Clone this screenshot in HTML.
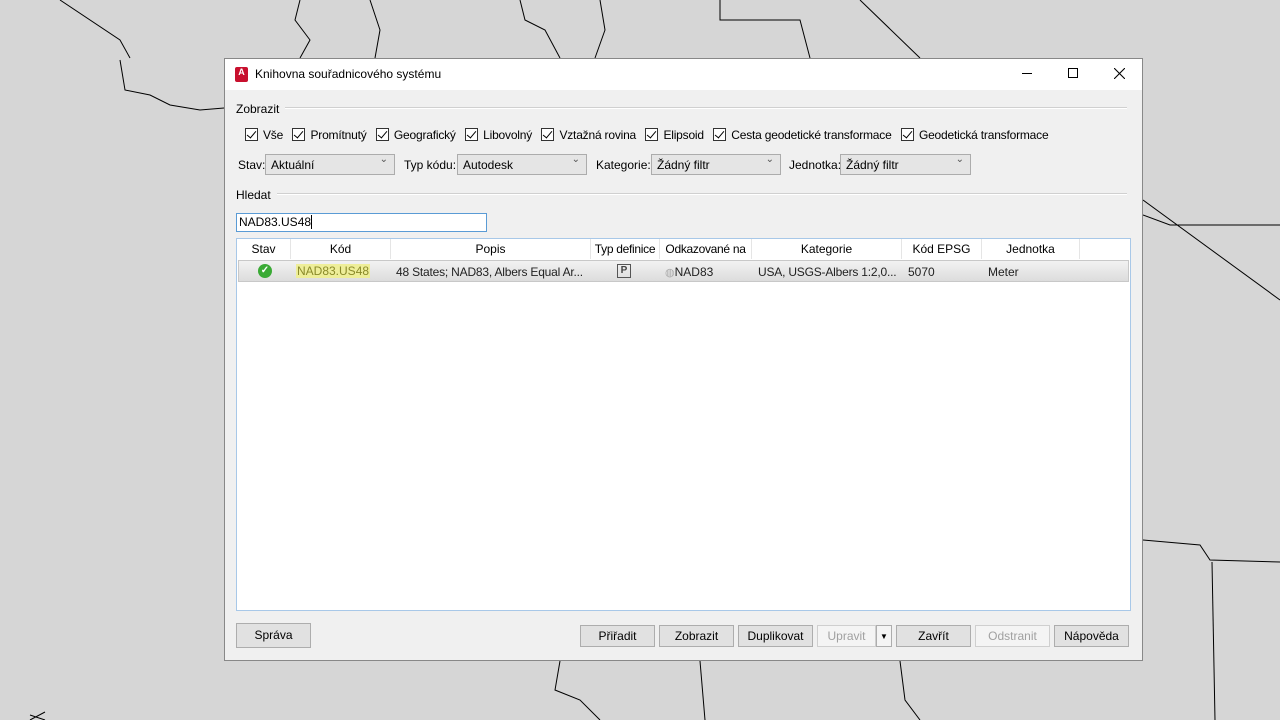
<!DOCTYPE html>
<html><head><style>
*{box-sizing:border-box;margin:0;padding:0}
body{width:1280px;height:720px;background:#d6d6d6;font-family:"Liberation Sans",sans-serif;font-size:12px;color:#000;position:relative;overflow:hidden}
.a{position:absolute}
.dlg{left:224px;top:58px;width:919px;height:603px;background:#f0f0f0;border:1px solid #888}
.tb{left:0;top:0;width:917px;height:31px;background:#fff}
.cb{display:inline-block;width:13px;height:13px;border:1px solid #333;background:#fff;vertical-align:-2px;margin-right:5px;position:relative}
.cb:after{content:"";position:absolute;left:3px;top:0px;width:4px;height:8px;border:solid #000;border-width:0 1.5px 1.5px 0;transform:rotate(40deg)}
.sel{height:21px;border:1px solid #acacac;background:#e5e5e5;padding:3px 5px;font-size:12px}
.sel:after{content:"⌄";position:absolute;right:6px;top:-1px;font-size:10px;color:#555}
.btn{height:23px;border:1px solid #adadad;background:#e1e1e1;text-align:center;line-height:21px;font-size:12px}
.dis{color:#a0a0a0;background:#f4f4f4;border-color:#cfcfcf}
.hd{top:0;height:20px;line-height:20px;text-align:center;border-right:1px solid #e5e5e5}
.line{height:2px;background:#d0d0d0;border-bottom:1px solid #fff}
</style></head><body>
<svg class="a" style="left:0;top:0" width="1280" height="720" fill="none" stroke="#000" stroke-width="1">
<path d="M60 0 L120 40 L130 58"/><path d="M120 60 L125 90 L150 95 L170 105 L200 110 L224 108"/>
<path d="M300 0 L295 20 L310 40 L300 58"/><path d="M370 0 L380 30 L375 58"/>
<path d="M520 0 L525 20 L545 30 L560 58"/><path d="M600 0 L605 30 L595 58"/>
<path d="M720 0 L720 20 L800 20 L810 58"/><path d="M860 0 L920 58"/>
<path d="M1143 200 L1280 300"/><path d="M1143 215 L1170 225 L1280 225"/>
<path d="M1143 540 L1200 545 L1210 560 L1280 562"/><path d="M1212 562 L1215 720"/>
<path d="M560 661 L555 690 L580 700 L600 720"/><path d="M700 661 L705 720"/><path d="M900 661 L905 700 L920 720"/>
<path d="M30 715 L45 720 M30 720 L45 712"/>
</svg>
<div class="a dlg">
 <div class="a tb">
  <div class="a" style="left:10px;top:8px;width:13px;height:15px;background:#c8102e;border-radius:2px;color:#fff;font-size:9px;font-weight:bold;text-align:center;line-height:11px">A</div>
  <div class="a" style="left:30px;top:8px;font-size:12px">Knihovna souřadnicového systému</div>
  <div class="a" style="left:797px;top:14px;width:10px;height:1px;background:#000"></div>
  <div class="a" style="left:843px;top:9px;width:10px;height:10px;border:1px solid #000"></div>
  <svg class="a" style="left:889px;top:9px" width="11" height="11" stroke="#000" stroke-width="1.1"><path d="M0 0 L11 11 M11 0 L0 11"/></svg>
 </div>
 <div class="a" style="left:11px;top:43px">Zobrazit</div>
 <div class="a line" style="left:60px;top:48px;width:842px"></div>
 <div class="a" style="left:20px;top:69px;white-space:nowrap;font-size:12px;letter-spacing:-0.2px">
  <span class="cb"></span>Vše&nbsp;&nbsp;&nbsp;<span class="cb"></span>Promítnutý&nbsp;&nbsp;&nbsp;<span class="cb"></span>Geografický&nbsp;&nbsp;&nbsp;<span class="cb"></span>Libovolný&nbsp;&nbsp;&nbsp;<span class="cb"></span>Vztažná rovina&nbsp;&nbsp;&nbsp;<span class="cb"></span>Elipsoid&nbsp;&nbsp;&nbsp;<span class="cb"></span>Cesta geodetické transformace&nbsp;&nbsp;&nbsp;<span class="cb"></span>Geodetická transformace</div>
 <div class="a" style="left:13px;top:99px">Stav:</div>
 <div class="a sel" style="left:40px;top:95px;width:130px">Aktuální</div>
 <div class="a" style="left:179px;top:99px">Typ kódu:</div>
 <div class="a sel" style="left:232px;top:95px;width:130px">Autodesk</div>
 <div class="a" style="left:371px;top:99px">Kategorie:</div>
 <div class="a sel" style="left:426px;top:95px;width:130px">Žádný filtr</div>
 <div class="a" style="left:564px;top:99px">Jednotka:</div>
 <div class="a sel" style="left:615px;top:95px;width:131px">Žádný filtr</div>
 <div class="a" style="left:11px;top:129px">Hledat</div>
 <div class="a line" style="left:52px;top:134px;width:850px"></div>
 <div class="a" style="left:11px;top:154px;width:251px;height:19px;background:#fff;border:1px solid #5a9bd5;padding:1px 2px">NAD83.US48<span style="border-left:1px solid #000"></span></div>
 <div class="a" style="left:11px;top:179px;width:895px;height:373px;background:#fff;border:1px solid #a8c8e8">
  <div class="a hd" style="left:0;width:54px">Stav</div>
  <div class="a hd" style="left:54px;width:100px">Kód</div>
  <div class="a hd" style="left:154px;width:200px">Popis</div>
  <div class="a hd" style="left:354px;width:69px;letter-spacing:-0.3px">Typ definice</div>
  <div class="a hd" style="left:423px;width:92px;letter-spacing:-0.3px">Odkazované na</div>
  <div class="a hd" style="left:515px;width:150px">Kategorie</div>
  <div class="a hd" style="left:665px;width:80px">Kód EPSG</div>
  <div class="a hd" style="left:745px;width:98px">Jednotka</div>
  <div class="a" style="left:1px;top:21px;width:891px;height:22px;background:linear-gradient(#f2f2f2,#dcdcdc);border:1px solid #c8c8c8"></div>
  <div class="a" style="left:21px;top:25px;width:14px;height:14px;border-radius:50%;background:#3aaa35;color:#fff;font-size:10px;line-height:14px;text-align:center;font-weight:bold">✓</div>
  <div class="a" style="left:59px;top:25px;background:#eeee99;color:#8a8a2a;padding:0 1px">NAD83.US48</div>
  <div class="a" style="left:159px;top:26px;color:#222;letter-spacing:-0.2px">48 States; NAD83, Albers Equal Ar...</div>
  <div class="a" style="left:380px;top:25px;width:14px;height:14px;border:1.5px solid #555;font-size:10px;font-weight:bold;line-height:11px;text-align:center;color:#444">P</div>
  <div class="a" style="left:428px;top:26px;color:#222"><span style="color:#aaa;font-size:11px">◍</span>NAD83</div>
  <div class="a" style="left:521px;top:26px;color:#222;letter-spacing:-0.2px">USA, USGS-Albers 1:2,0...</div>
  <div class="a" style="left:671px;top:26px;color:#222">5070</div>
  <div class="a" style="left:751px;top:26px;color:#222">Meter</div>
 </div>
 <div class="a btn" style="left:11px;top:564px;width:75px;height:25px;line-height:23px">Správa</div>
 <div class="a btn" style="left:355px;top:566px;width:75px;height:22px">Přiřadit</div>
 <div class="a btn" style="left:434px;top:566px;width:75px;height:22px">Zobrazit</div>
 <div class="a btn" style="left:513px;top:566px;width:75px;height:22px">Duplikovat</div>
 <div class="a btn dis" style="left:592px;top:566px;width:59px;height:22px">Upravit</div>
 <div class="a btn" style="left:651px;top:566px;width:16px;height:22px;background:#f4f4f4;font-size:8px">▼</div>
 <div class="a btn" style="left:671px;top:566px;width:75px;height:22px">Zavřít</div>
 <div class="a btn dis" style="left:750px;top:566px;width:75px;height:22px">Odstranit</div>
 <div class="a btn" style="left:829px;top:566px;width:75px;height:22px">Nápověda</div>
</div>
</body></html>
